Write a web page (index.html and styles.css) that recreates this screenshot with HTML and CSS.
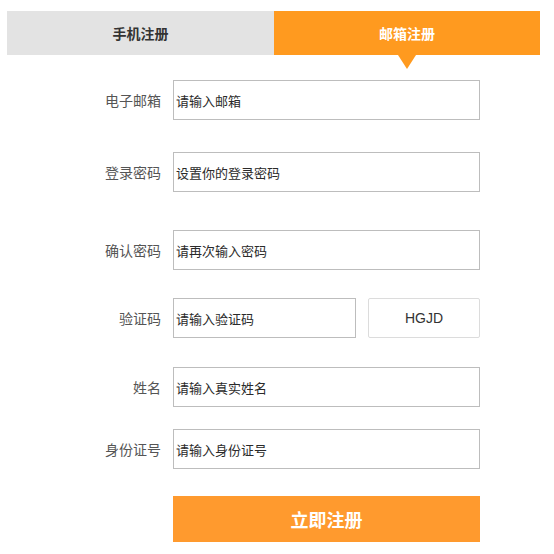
FILE: index.html
```html
<!DOCTYPE html>
<html lang="zh-CN">
<head>
<meta charset="utf-8">
<title>注册</title>
<link rel="stylesheet" href="styles.css">
</head>
<body>
<div class="page">
  <div class="tabs">
    <div class="tab">手机注册</div>
    <div class="tab active">邮箱注册</div>
  </div>
  <form class="form">
    <div class="row r1">
      <label class="label">电子邮箱</label>
      <div class="field"><span class="ph">请输入邮箱</span></div>
    </div>
    <div class="row r2">
      <label class="label">登录密码</label>
      <div class="field"><span class="ph">设置你的登录密码</span></div>
    </div>
    <div class="row r3">
      <label class="label">确认密码</label>
      <div class="field"><span class="ph">请再次输入密码</span></div>
    </div>
    <div class="row r4">
      <label class="label">验证码</label>
      <div class="code-wrap">
        <div class="field code-field"><span class="ph">请输入验证码</span></div>
        <div class="code">HGJD</div>
      </div>
    </div>
    <div class="row r5">
      <label class="label">姓名</label>
      <div class="field"><span class="ph">请输入真实姓名</span></div>
    </div>
    <div class="row r6">
      <label class="label">身份证号</label>
      <div class="field"><span class="ph">请输入身份证号</span></div>
    </div>
    <div class="row r7">
      <span class="label"></span>
      <div class="submit">立即注册</div>
    </div>
  </form>
</div>
</body>
</html>
```

FILE: styles.css
```css
* { box-sizing: border-box; }
html, body {
  margin: 0;
  padding: 0;
  background: #ffffff;
  font-family: "Noto Sans CJK SC", "Noto Sans", sans-serif;
  color: #333333;
}
.page {
  padding: 11px 14px 0 7px;
}
.tabs {
  display: flex;
  width: 533px;
  height: 44px;
}
.tab {
  flex: 0 0 267px;
  background: #e3e3e3;
  display: flex;
  align-items: center;
  justify-content: center;
  font-size: 14px;
  font-weight: 700;
  color: #333333;
}
.tab.active {
  flex: 0 0 266px;
  background: #ff9a1f;
  color: #ffffff;
  position: relative;
}
.tab.active::after {
  content: "";
  position: absolute;
  left: 50%;
  top: 100%;
  margin-left: -9px;
  border-left: 9px solid transparent;
  border-right: 9px solid transparent;
  border-top: 14px solid #ff9a1f;
}
.form {
  display: flex;
  flex-direction: column;
}
.row {
  display: grid;
  grid-template-columns: 154px 307px;
  column-gap: 12px;
  align-items: center;
}
.r1 { margin-top: 25px; }
.r2 { margin-top: 32px; }
.r3 { margin-top: 38px; }
.r4 { margin-top: 28px; }
.r5 { margin-top: 29px; }
.r6 { margin-top: 22px; }
.r7 { margin-top: 27px; }
.label {
  text-align: right;
  font-size: 14px;
  color: #555555;
}
.field {
  height: 40px;
  border: 1px solid #bdbdbd;
  background: #ffffff;
  display: flex;
  align-items: center;
  padding-left: 2px;
}
.ph {
  font-size: 13px;
  color: #2a2a2a;
}
.code-wrap {
  display: flex;
  gap: 12px;
}
.code-field {
  width: 183px;
}
.code {
  flex: 1;
  height: 40px;
  border: 1px solid #dcdcdc;
  border-radius: 2px;
  display: flex;
  align-items: center;
  justify-content: center;
  font-family: "Liberation Sans", Arial, sans-serif;
  font-size: 14px;
  color: #333333;
}
.submit {
  height: 46px;
  background: #ff9a2e;
  color: #ffffff;
  font-size: 18px;
  font-weight: 700;
  display: flex;
  align-items: center;
  justify-content: center;
}
```
